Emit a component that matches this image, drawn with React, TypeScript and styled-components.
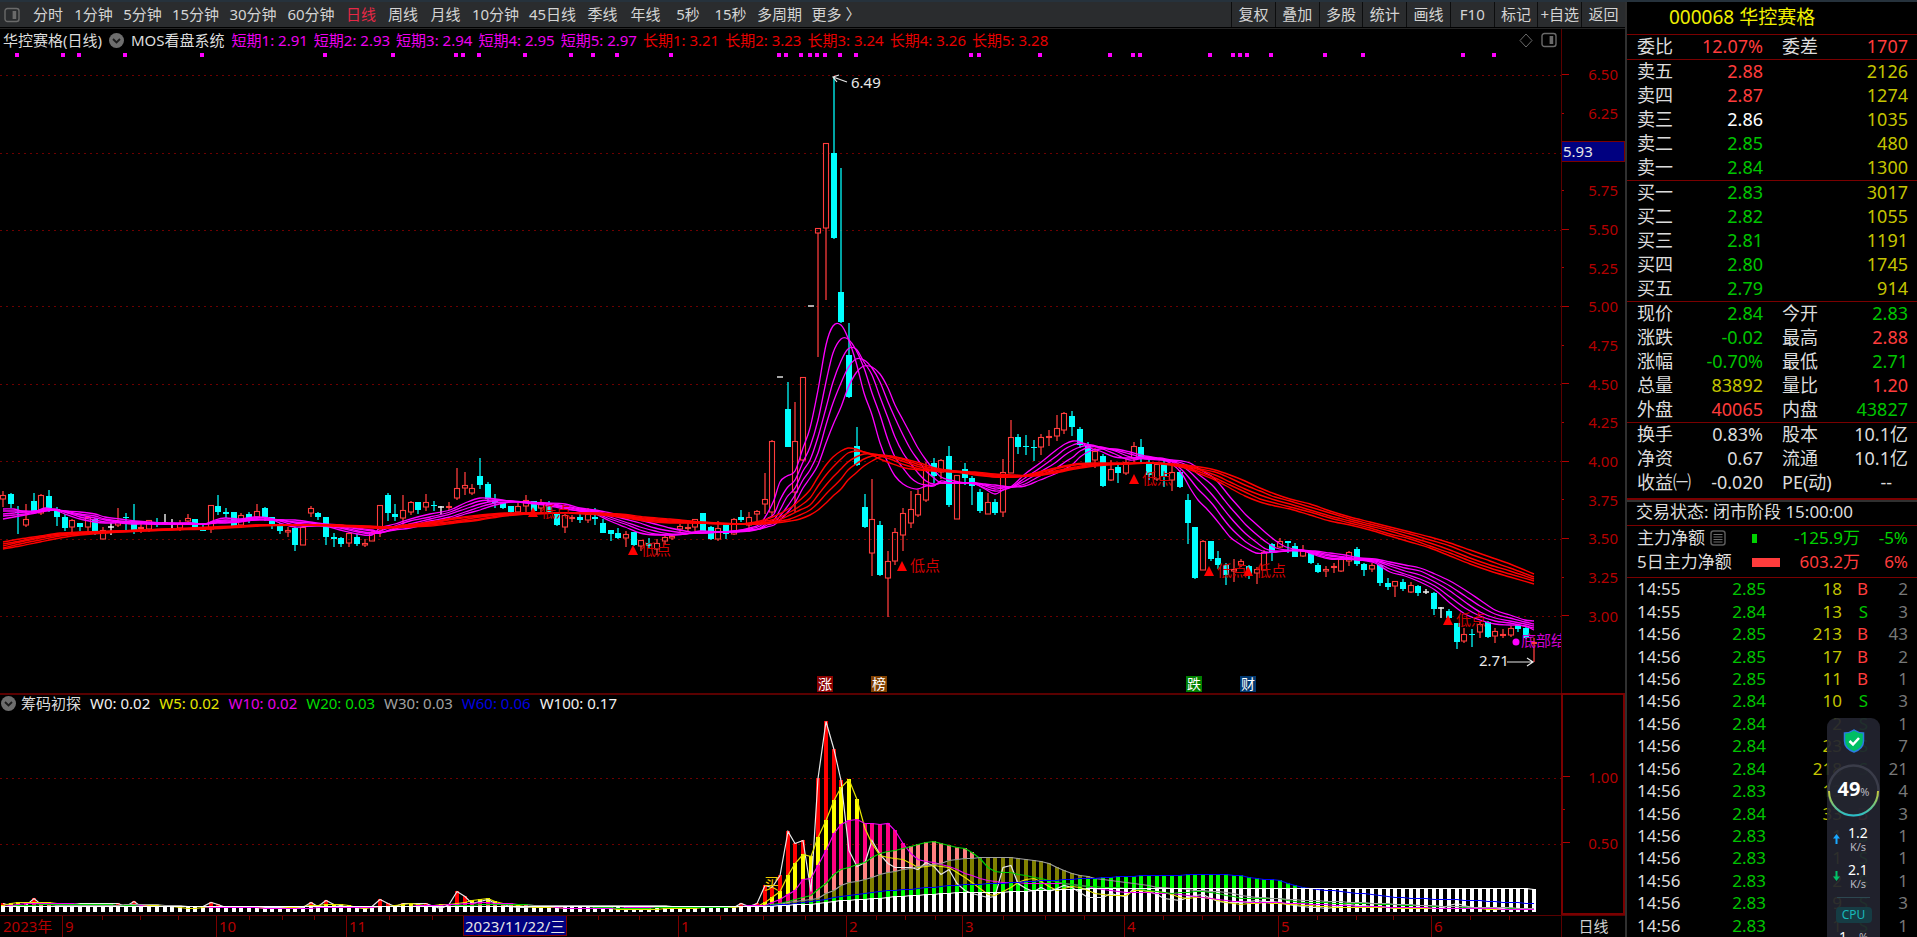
import React from 'react';
import styled, { createGlobalStyle } from 'styled-components';

const RED = '#ff3c3c';
const GREEN = '#00c400';
const YELLOW = '#c4c400';
const PALE = '#dcdcdc';
const LINE = '#7a0000';
const DIM_LINE = '#5a0000';
const AXIS_TEXT = '#b40000';

/* ---------- data ---------- */

type Kind = 'U' | 'D' | 'N';

// kind, wick top, body top, body bottom, wick bottom (plot coordinates)
const CANDLES = `
U 491 495 499 507|D 493 494 504 508|D 506 512 513 534|U 504 519 525 527|D 493 501 511 511|U 494 495 513 515|D 490 496 508 512|D 507 509 517 526|D 514 517 528 531|U 519 520 527 532
D 523 523 527 531|U 517 517 527 532|D 518 519 534 535|U 527 530 539 539|N 523 527 527 535|U 508 522 525 527|D 513 517 518 530|D 504 521 530 534|U 523 527 528 533|U 520 520 529 532
D 518 524 525 527|N 514 523 523 525|N 519 524 524 529|U 520 523 528 531|U 514 518 521 522|D 519 519 527 527|D 525 529 531 531|U 505 505 529 533|D 495 506 512 515|D 508 512 514 518
D 512 512 526 526|U 513 515 525 527|D 512 514 519 523|U 504 511 517 519|D 507 508 517 521|D 517 517 525 529|D 523 525 531 534|U 527 530 532 537|D 527 528 545 551|U 526 527 545 545
U 506 508 513 517|D 512 513 517 520|D 517 517 537 545|D 533 537 539 547|D 537 538 544 547|U 532 533 543 547|D 534 537 544 546|U 539 543 545 547|U 530 532 541 541|U 505 505 530 537
D 493 495 513 521|D 504 514 517 521|U 495 510 518 525|U 501 502 512 515|D 502 502 510 514|U 494 502 507 511|D 501 505 506 511|N 506 507 507 514|U 502 506 507 510|U 468 488 498 500
U 472 485 488 495|U 484 488 493 495|D 458 476 485 489|D 482 484 499 502|D 494 500 503 508|D 502 502 508 509|D 506 506 512 513|U 503 506 512 514|U 495 500 506 512|D 501 501 511 512
U 499 502 508 512|D 501 503 513 514|D 513 514 525 526|U 514 515 527 533|U 515 517 518 522|D 514 517 520 523|U 508 514 520 523|D 508 517 519 525|D 519 523 533 533|D 530 530 534 541
D 528 533 538 539|U 531 534 538 547|D 532 532 545 546|U 540 540 546 551|D 538 543 546 549|U 539 543 549 555|U 535 537 541 545|U 534 536 538 540|U 524 526 529 532|U 523 527 528 531
U 519 519 527 531|D 513 513 531 531|D 526 527 539 540|U 521 528 539 541|D 524 525 534 539|U 518 519 534 535|D 510 517 520 522|U 512 517 525 532|U 510 511 514 523|U 473 499 504 514
U 440 441 512 517|N 377 377 377 377|D 382 409 447 447|U 402 441 492 512|U 377 377 460 461|N 306 306 306 306|U 228 228 233 357|U 143 143 228 300|D 77 153 238 239|D 168 292 322 323
D 323 355 397 398|D 427 446 465 466|D 494 507 527 528|U 479 519 553 576|D 521 525 575 576|U 551 561 578 617|U 528 532 561 565|U 508 513 535 551|U 491 509 523 528|U 490 494 515 517
U 462 469 500 502|D 458 463 476 483|U 459 460 472 479|D 446 456 505 507|U 475 475 519 519|D 463 469 478 485|D 476 478 486 505|D 489 492 511 513|U 493 502 514 514|D 499 502 513 515
U 459 472 512 517|U 420 437 473 473|D 434 437 447 454|D 435 446 447 455|D 440 447 448 461|U 434 437 447 455|U 430 436 437 446|U 415 428 436 441|U 412 413 430 434|D 411 416 427 436
D 427 429 445 448|D 442 445 463 463|U 448 451 460 468|D 454 456 486 487|U 460 469 480 481|D 463 467 473 483|U 459 462 473 475|U 442 446 458 462|D 439 447 457 463|D 458 462 475 480
U 462 464 479 481|D 460 463 476 487|U 465 472 480 491|D 470 472 487 488|D 494 500 523 544|D 527 527 578 579|U 540 541 570 570|D 541 541 559 561|D 551 558 565 569|D 563 565 575 585
U 559 569 571 582|U 559 561 565 567|D 565 566 575 579|U 567 569 573 584|U 550 552 570 570|D 543 544 552 561|U 538 541 547 548|D 541 541 543 553|D 543 546 557 557|U 545 550 556 557
D 553 553 563 564|D 563 565 572 573|U 566 569 571 577|U 563 566 567 573|U 557 559 571 572|U 551 552 561 566|D 547 549 564 566|D 563 564 570 576|U 563 565 569 572|D 564 565 583 586
D 578 583 587 590|U 581 581 586 597|D 579 582 589 591|U 582 585 592 593|D 585 586 593 596|N 589 592 592 594|D 592 593 609 615|N 607 608 608 618|D 609 611 618 620|D 623 623 642 649
U 628 634 641 643|D 629 634 635 647|U 622 624 632 638|D 621 622 637 638|U 628 631 636 643|U 629 634 635 638|U 626 628 635 637|D 625 625 629 632|D 627 628 638 639|U 638 642 643 662`
  .trim()
  .split(/[|\n]/)
  .map((row) => {
    const [kind, ...ys] = row.split(' ');
    const [high, top, bottom, low] = ys.map(Number);
    return { kind: kind as Kind, high, top, bottom, low };
  });

const PLOT_W = 1561;
const barX = (i: number) => 3 + i * 7.692;

const table = (text: string) =>
  text
    .trim()
    .split(/[;\n]+/)
    .map((r) => r.trim().split(/[ ,]+/).map(Number));

// x, then the five short averages
const SHORT = table(`
3 509 511 514 516 519;14 509 511 513 515 517;25 512 511 512 514 515;36 511 511 512 512 513;45 508 509 510 511 511;55 510 510 509 510 510
65 514 512 512 511 511;80 519 517 515 514 512;95 522 520 518 516 514;105 523 522 520 519 517;120 523 522 522 521 519;135 524 523 523 522 521
150 523 524 524 523 522;165 523 524 524 524 523;190 523 523 524 524 524;205 524 524 524 524 524;215 520 521 522 523 523;225 518 520 521 522 523
240 519 520 521 521 522;255 517 518 519 520 520;268 518 518 519 520 520;280 523 521 520 520 520;295 527 525 523 522 520;310 526 526 525 523 522
325 526 526 526 525 524;340 530 528 527 526 525;358 534 532 531 529 528;372 535 534 533 531 530;380 528 531 533 533 532;395 524 526 528 529 530
410 519 521 524 526 528;430 514 517 519 521 523;450 510 512 514 517 519;465 503 506 509 512 514;480 498 501 504 507 510;495 499 500 501 503 505
510 501 501 501 502 502;525 503 502 502 502 502;545 505 504 504 503 503;565 509 508 507 506 504;580 511 511 510 509 508;595 514 513 512 511 510
610 521 519 517 515 513;625 527 524 522 519 516;640 533 530 527 523 520;655 535 534 531 528 524;670 535 535 534 531 528;685 534 534 534 533 531
700 531 532 533 533 533;720 532 532 532 532 532;735 531 531 531 532 532;750 528 529 530 530 531;760 524 526 528 529 529;767 514 519 523 525 527
774 500 514 520 523 525;780 482 500 510 516 520;787 476 488 497 507 513;795 471 480 488 495 503;803 448 462 471 480 488;810 428 447 460 470 478
818 390 420 437 453 465;826 345 382 408 425 443;833 326 353 382 403 425;841 325 339 361 383 407;848 338 339 349 368 388;856 362 350 349 359 373
864 393 368 362 360 366;872 415 393 375 368 367;880 443 415 397 382 374;888 463 440 418 402 388;895 476 457 437 418 405;903 484 468 453 435 420
911 488 478 464 450 435;918 489 483 473 460 448;926 486 485 481 471 460;934 486 485 484 478 470;941 481 483 483 483 477;950 483 483 483 483 480
965 483 483 483 483 483;975 484 484 483 483 483;985 489 488 486 485 484;995 494 491 489 487 485;1003 490 490 488 487 486;1012 486 487 487 487 487
1025 474 478 481 484 486;1040 463 468 472 476 480;1055 451 457 463 469 474;1065 444 449 455 462 469;1073 441 445 450 457 464;1080 442 443 447 451 457
1090 448 445 445 447 451;1100 451 448 447 447 449;1115 457 454 451 450 449;1130 458 460 457 454 452;1145 457 458 459 458 456;1160 459 459 460 459 458
1172 464 462 461 461 460;1182 474 470 466 463 461;1190 488 479 472 467 463;1198 500 489 480 474 468;1206 508 497 488 480 473;1214 517 506 497 487 478
1222 527 517 507 497 487;1230 537 527 517 507 497;1238 543 535 526 516 506;1246 548 542 534 525 515;1256 553 548 542 534 524;1266 553 552 549 542 533
1276 552 552 551 548 541;1286 551 551 551 550 547;1300 550 550 550 551 550;1315 555 554 553 552 551;1330 559 558 556 555 553;1345 559 559 558 557 555
1360 560 560 560 559 558;1375 563 562 561 560 559;1390 572 569 566 564 562;1405 576 574 571 568 565;1420 582 579 575 571 568;1435 590 586 582 578 574
1450 603 597 591 586 581;1465 614 608 602 596 590;1480 620 616 612 606 600;1495 624 621 618 614 610;1510 625 623 621 618 615;1525 626 626 624 622 620
1534 630 628 626 624 621`);

// x, then the five long averages
const LONG = table(`
3 542 544 546 548 549;20 539 541 542 544 546;40 536 537 538 540 542;60 533 534 535 536 538;80 532 533 533 534 535;120 531 531 531 532 532
170 529 529 529 530 530;210 527 528 528 528 529;260 525 525 525 525 526;300 525 525 525 525 525;330 526 525 525 525 525;370 528 527 527 527 526
385 528 528 528 527 527;405 525 526 527 527 527;430 522 523 524 525 526;455 518 519 521 522 523;480 515 516 517 519 520;505 513 514 514 515 516
530 513 513 513 514 514;560 513 513 513 513 513;590 514 514 513 513 513;620 517 516 515 515 514;645 521 520 519 518 517;670 523 522 521 520 519
700 523 523 523 522 522;740 524 524 524 524 524;760 521 522 523 524 524;775 516 519 521 522 523;790 508 512 515 519 521;800 500 506 510 515 519
810 490 498 505 510 515;818 477 486 495 503 510;826 465 475 485 494 503;833 457 467 477 487 496;841 451 459 469 479 489;848 448 453 462 470 480
856 449 451 457 464 473;864 452 452 454 459 466;872 455 454 454 456 461;880 459 456 455 455 457;890 463 459 457 456 456;905 468 465 462 460 459
920 470 469 467 465 463;935 471 471 470 469 468;955 472 472 472 471 471;975 475 474 473 473 472;995 477 477 476 475 474;1015 477 477 477 476 475
1035 473 474 475 475 476;1055 468 469 471 472 473;1075 464 465 467 468 469;1095 463 464 464 465 466;1120 463 464 464 464 464;1150 463 463 463 463 463
1170 465 464 464 464 464;1185 468 467 466 465 465;1200 474 472 470 469 467;1215 480 478 475 472 470;1230 488 485 482 478 475;1245 496 492 489 485 481
1260 502 499 495 491 488;1275 506 503 500 497 494;1290 509 507 504 501 499;1310 515 512 510 507 504;1330 521 518 516 513 511;1350 525 523 521 519 517
1370 530 528 526 524 522;1390 536 534 531 529 527;1410 542 539 537 534 532;1430 548 546 543 540 537;1450 556 553 550 546 543;1470 564 561 558 554 550
1490 571 568 565 561 557;1510 577 574 571 568 564;1534 584 581 579 577 574`);

interface Series {
  bar: string;
  line: string;
  pts: number[][];
}

// chip-distribution series, from the lowest layer to the top one
const CHIPS: Series[] = [
  {
    bar: '#ff0000',
    line: '#e8e8e8',
    pts: table(`
3 903;11 905;26 905;33 897;41 904;118 903;126 906;133 901;141 906;203 906;211 902;218 904;226 907;303 907;310 902;318 906;326 900;334 904;350 907;364 908
372 906;380 899;387 903;395 906;403 903;426 903;441 908;449 904;457 891;464 895;472 903;487 899;495 903;520 907;570 905;700 907;735 907;742 903;749 906
757 903;765 884;772 887;780 875;787 830;795 843;803 840;811 893;818 781;826 721;833 746;841 776;849 850;857 866;864 863;872 840;880 854;887 863;895 867
910 867;918 869;925 862;933 865;941 874;948 867;956 882;964 890;979 895;987 897;995 897;1002 868;1010 863;1017 882;1025 888;1033 891;1041 887;1048 891
1064 885;1074 887;1087 897;1103 897;1110 893;1125 897;1134 888;1148 890;1165 898;1180 900;1200 893;1220 902;1240 902;1255 900;1280 902;1300 906;1326 908
1350 904;1400 908;1440 908;1456 903;1475 908;1534 909`),
  },
  {
    bar: '#ffff00',
    line: '#e6e600',
    pts: table(`
3 905;18 902;48 902;65 904;150 905;195 908;215 906;280 908;325 904;345 904;360 908;395 905;410 903;430 905;457 903;487 898;500 903;530 907;640 909;757 906
765 902;772 897;780 891;787 876;795 863;803 854;811 856;818 838;826 820;833 801;841 787;849 779;857 799;864 827;872 843;880 855;887 857;902 858;917 867
933 865;950 867;960 875;973 882;985 893;995 895;1005 890;1018 882;1030 877;1040 880;1055 890;1075 885;1095 893;1125 896;1134 890;1162 891;1183 898;1207 897
1220 901;1238 904;1265 902;1293 904;1341 907;1534 909`),
  },
  {
    bar: '#ff0080',
    line: '#f000f0',
    pts: table(`
3 906;30 903;65 903;120 905;290 908;400 906;457 904;487 902;520 904;570 908;680 907;765 905;780 899;795 890;803 879;811 878;818 866;826 850;833 834;841 824
849 820;857 819;864 823;872 823;880 824;887 822;895 830;903 843;910 852;920 860;935 862;950 866;963 872;980 878;1000 882;1040 883;1060 883;1080 885;1110 890
1124 892;1140 892;1170 893;1200 897;1230 901;1260 902;1300 903;1340 905;1400 907;1534 909`),
  },
  {
    bar: '#ff8080',
    line: '#00d200',
    pts: table(`
3 906;50 904;100 904;150 906;440 906;487 904;570 905;620 908;765 906;787 901;803 897;811 895;826 883;833 875;841 869;849 867;857 864;864 862;872 857;880 853
895 850;910 846;925 842;935 841;948 845;955 847;965 848;973 853;980 858;988 867;997 872;1010 872;1025 875;1040 878;1060 882;1080 885;1110 887;1135 888
1170 893;1200 891;1220 893;1240 898;1280 898;1300 902;1360 903;1440 906;1534 908`),
  },
  {
    bar: '#808000',
    line: '#a0a0a0',
    pts: table(`
3 906;100 905;150 904;200 906;487 906;570 905;765 906;803 900;818 898;826 893;833 890;841 885;849 882;865 879;880 874;895 871;910 868;925 865;940 863;950 860
965 858;985 857;1010 857;1020 858;1040 861;1048 863;1060 868;1073 873;1090 877;1110 880;1134 883;1160 887;1200 890;1225 892;1250 896;1290 899;1330 901
1400 904;1450 906;1534 908`),
  },
  {
    bar: '#00ff00',
    line: '#0000ff',
    pts: table(`
3 906;570 906;765 906;803 902;820 900;841 896;865 893;880 891;910 889;940 886;970 884;1000 883;1025 881;1050 880;1085 878;1110 877;1124 876;1145 875;1180 875
1190 874;1225 874;1240 875;1255 878;1270 879;1280 880;1290 884;1305 888;1330 890;1370 894;1410 898;1450 899;1490 901;1534 903`),
  },
  {
    bar: '#ffffff',
    line: '#ffffff',
    pts: table(`
3 906;765 906;803 904;820 903;841 900;865 899;895 896;930 894;960 892;1000 892;1040 890;1100 888;1526 888;1534 889`),
  },
];

const DOTS = [
  17, 63, 79, 125, 202, 325, 393, 456, 463, 479, 525, 571, 593, 617, 671, 779, 786, 801, 810, 817, 825, 840, 856, 971,
  979, 1040, 1110, 1133, 1140, 1210, 1233, 1240, 1247, 1271, 1325, 1363, 1463, 1494,
];

const at = (pts: number[][], x: number) => {
  for (let k = 1; k < pts.length; k++) {
    if (x <= pts[k][0]) {
      const [x0, y0] = pts[k - 1];
      const [x1, y1] = pts[k];
      return y0 + ((y1 - y0) * (x - x0)) / (x1 - x0);
    }
  }
  return pts[pts.length - 1][1];
};

const smooth = (pts: number[][], col: number) => {
  let d = `M${pts[0][0]} ${pts[0][col]}`;
  for (let i = 0; i < pts.length - 1; i++) {
    const a = pts[Math.max(0, i - 1)];
    const b = pts[i];
    const c = pts[i + 1];
    const e = pts[Math.min(pts.length - 1, i + 2)];
    const dx = (c[0] - b[0]) / 3;
    const m1 = (c[col] - a[col]) / (c[0] - a[0]);
    const m2 = (e[col] - b[col]) / (e[0] - b[0]);
    d += `C${b[0] + dx} ${b[col] + m1 * dx} ${c[0] - dx} ${c[col] - m2 * dx} ${c[0]} ${c[col]}`;
  }
  return d;
};

const PERIODS: [string, number][] = [
  ['分时', 42], ['1分钟', 49], ['5分钟', 49], ['15分钟', 57], ['30分钟', 58], ['60分钟', 58], ['日线', 42], ['周线', 42],
  ['月线', 43], ['10分钟', 57], ['45日线', 57], ['季线', 43], ['年线', 43], ['5秒', 42], ['15秒', 43], ['多周期', 55],
  ['更多 〉', 58],
];
const ACTIONS = ['复权', '叠加', '多股', '统计', '画线', 'F10', '标记', '+自选', '返回'];

const SHORT_LABELS = ['短期1: 2.91', '短期2: 2.93', '短期3: 2.94', '短期4: 2.95', '短期5: 2.97'];
const LONG_LABELS = ['长期1: 3.21', '长期2: 3.23', '长期3: 3.24', '长期4: 3.26', '长期5: 3.28'];
const CHIP_LABELS: [string, string][] = [
  ['W0: 0.02', '#f0f0f0'], ['W5: 0.02', '#e6e600'], ['W10: 0.02', '#e600e6'], ['W20: 0.03', '#00dc00'],
  ['W30: 0.03', '#a0a0a0'], ['W60: 0.06', '#0000e0'], ['W100: 0.17', '#f0f0f0'],
];

const PRICES = [
  '6.50', '6.25', '', '5.75', '5.50', '5.25', '5.00', '4.75', '4.50', '4.25', '4.00', '3.75', '3.50', '3.25', '3.00',
];

type Level = [string, string, string, string];
const SELLS: Level[] = [
  ['卖五', '2.88', '2126', RED], ['卖四', '2.87', '1274', RED], ['卖三', '2.86', '1035', '#ffffff'],
  ['卖二', '2.85', '480', GREEN], ['卖一', '2.84', '1300', GREEN],
];
const BUYS: Level[] = [
  ['买一', '2.83', '3017', GREEN], ['买二', '2.82', '1055', GREEN], ['买三', '2.81', '1191', GREEN],
  ['买四', '2.80', '1745', GREEN], ['买五', '2.79', '914', GREEN],
];
type Pair = [string, string, string, string, string, string];
const QUOTE: Pair[] = [
  ['现价', '2.84', GREEN, '今开', '2.83', GREEN],
  ['涨跌', '-0.02', GREEN, '最高', '2.88', RED],
  ['涨幅', '-0.70%', GREEN, '最低', '2.71', GREEN],
  ['总量', '83892', YELLOW, '量比', '1.20', RED],
  ['外盘', '40065', RED, '内盘', '43827', GREEN],
];
const BASICS: Pair[] = [
  ['换手', '0.83%', PALE, '股本', '10.1亿', PALE],
  ['净资', '0.67', PALE, '流通', '10.1亿', PALE],
  ['收益㈠', '-0.020', PALE, 'PE(动)', '--', PALE],
];
const TRADES = `14:55 2.85 18 B 2|14:55 2.84 13 S 3|14:56 2.85 213 B 43|14:56 2.85 17 B 2|14:56 2.85 11 B 1|14:56 2.84 10 S 3|14:56 2.84 2 S 1|14:56 2.84 23 S 7|14:56 2.84 218 S 21|14:56 2.83 13 S 4|14:56 2.84 33 B 3|14:56 2.83 1 S 1|14:56 2.83 1 S 1|14:56 2.83 2 S 1|14:56 2.83 9 S 3|14:56 2.83 1 S 1`
  .split('|')
  .map((r) => r.split(' '));

const MONTHS: [string, number][] = [
  ['2023年', 62], ['9', 154], ['10', 130], ['11', 332], ['1', 168], ['2', 116], ['3', 162], ['4', 154], ['5', 153],
  ['6', 130],
];
const WEEKS = [
  102, 140, 178, 249, 282, 314, 389, 432, 598, 639, 720, 763, 805, 876, 905, 935, 1003, 1045, 1084, 1163, 1202, 1239,
  1317, 1356, 1393, 1470, 1509,
];
const LOWS: [number, number][] = [[533, 512], [633, 550], [902, 566], [1134, 479], [1209, 571], [1248, 571], [1448, 620]];
const EVENTS: [string, number, string][] = [
  ['涨', 817, '#8b0000'], ['榜', 871, '#804000'], ['跌', 1186, '#008000'], ['财', 1240, '#003870'],
];

/* ---------- styles ---------- */

const Global = createGlobalStyle`
  *, *::before, *::after { box-sizing: border-box; }
  body {
    margin: 0;
    background: #000;
    color: ${PALE};
    font-family: "Noto Sans", "Noto Sans CJK SC", sans-serif;
    font-size: 15px;
    line-height: 20px;
  }
  button { font: inherit; }
`;

const Page = styled.div`
  display: flex;
  height: 100vh;
  overflow: hidden;
  border-top: 2px solid #26323c;
`;

const Workspace = styled.main`
  flex: 1;
  min-width: 0;
  display: flex;
  flex-direction: column;
`;

const Toolbar = styled.nav`
  display: flex;
  align-items: stretch;
  height: 25px;
  margin-bottom: 1px;
  background: #2a2c2e;
  overflow: hidden;
  flex-shrink: 0;
`;

const ToolIcon = styled.button`
  width: 27px;
  padding: 0 0 0 4px;
  border: 0;
  background: none;
  display: flex;
  align-items: center;
`;

const PeriodButton = styled.button<{ $w: number; $active: boolean }>`
  flex: 0 0 ${(p) => p.$w}px;
  padding: 0 0 1px;
  border: 0;
  background: none;
  white-space: pre;
  color: ${(p) => (p.$active ? '#e62846' : '#d4d4d4')};
`;

const Actions = styled.div`
  margin-left: auto;
  display: grid;
  grid-template-columns: repeat(9, 1fr);
  width: 394px;
`;

const ActionButton = styled.button`
  padding: 0 0 1px;
  border: 0;
  border-left: 1px solid #0c0d0e;
  background: none;
  color: #d4d4d4;
  white-space: nowrap;
`;

const MainPane = styled.section`
  flex: 664 1 0;
  min-height: 0;
  display: flex;
  border-top: 1px solid #242424;
`;

const LowerPane = styled.section`
  flex: 222 1 0;
  min-height: 0;
  display: flex;
`;

const Plot = styled.div`
  position: relative;
  flex: 1;
  min-width: 0;
  overflow: hidden;
`;

const LowerPlot = styled(Plot)`
  border-top: 2px solid ${DIM_LINE};
`;

const Drawing = styled.svg`
  position: absolute;
  left: 0;
  top: 0;
  width: 100%;
  height: 100%;
  display: block;
`;

const Legend = styled.div`
  position: relative;
  display: flex;
  align-items: center;
  height: 22px;
  gap: 6px;
  padding: 0 4px 0 3px;
  white-space: nowrap;
`;

const ChipLegend = styled(Legend)`
  height: 16px;
  gap: 9px;
  padding-left: 1px;
`;

const LegendName = styled.span`
  display: flex;
  align-items: center;
  gap: 5px;
`;

const MainName = styled(LegendName)`
  gap: 7px;
  padding-right: 1px;
`;

const LegendItem = styled.span<{ $color: string }>`
  color: ${(p) => p.$color};
`;

const LegendTools = styled.div`
  display: flex;
  align-items: center;
  gap: 8px;
  margin-left: auto;
`;

const IconButton = styled.button`
  display: flex;
  padding: 0;
  border: 0;
  background: none;
`;

const Mark = styled.span<{ $x: number; $y: number; $color: string }>`
  position: absolute;
  left: ${(p) => (p.$x / PLOT_W) * 100}%;
  top: ${(p) => p.$y * 100}%;
  margin-top: -11px;
  color: ${(p) => p.$color};
  white-space: nowrap;
`;

const EventBadge = styled.button<{ $x: number; $bg: string }>`
  position: absolute;
  left: ${(p) => (p.$x / PLOT_W) * 100}%;
  bottom: 1px;
  width: 16px;
  height: 16px;
  padding: 0;
  border: 0;
  background: ${(p) => p.$bg};
  color: #fff;
  font-size: 14px;
  line-height: 16px;
`;

const PriceAxis = styled.div`
  flex: 0 0 64px;
  display: flex;
  flex-direction: column;
  padding: 26px 0 58px;
  border-left: 1px solid ${DIM_LINE};
`;

const AxisRow = styled.div<{ $major: boolean }>`
  flex: 1;
  display: flex;
  align-items: center;
  justify-content: space-between;
  padding-right: 7px;
  color: ${AXIS_TEXT};
  &::before {
    content: '';
    width: ${(p) => (p.$major ? 7 : 2)}px;
    height: 1px;
    background: ${AXIS_TEXT};
  }
`;

const CursorRow = styled.div`
  flex: 1;
  display: flex;
  align-items: center;
`;

const CursorPrice = styled.span`
  flex: 1;
  height: 21px;
  line-height: 19px;
  padding-left: 1px;
  border: 1px solid ${LINE};
  border-left: 0;
  background: #000080;
  color: #e6e6e6;
`;

const LowerAxis = styled.div`
  flex: 0 0 64px;
  display: flex;
  flex-direction: column;
  padding-top: 65px;
  border: 2px solid ${LINE};
  > div {
    flex: 0 0 33px;
    padding-right: 5px;
  }
`;

const TimeAxis = styled.div`
  display: flex;
  flex: 0 0 22px;
  border-top: 1px solid ${DIM_LINE};
`;

const Months = styled.div`
  position: relative;
  flex: 1;
  min-width: 0;
  display: grid;
  grid-template-columns: ${MONTHS.map(([, n]) => `minmax(0, ${n}fr)`).join(' ')};
`;

const Month = styled.span`
  padding-left: 2px;
  border-left: 1px solid ${LINE};
  color: ${AXIS_TEXT};
  white-space: nowrap;
  &:first-of-type {
    border-left-color: transparent;
  }
`;

const CursorDate = styled.span`
  position: absolute;
  left: 29.66%;
  top: 0;
  bottom: 1px;
  padding: 0 1px;
  border: 1px solid ${LINE};
  border-top: 0;
  background: #000080;
  color: #e6e6e6;
`;

const PeriodName = styled.span`
  flex: 0 0 64px;
  border-left: 1px solid ${DIM_LINE};
  text-align: center;
  color: #d0d0d0;
`;

const Sidebar = styled.aside`
  position: relative;
  flex: 0 0 292px;
  display: flex;
  flex-direction: column;
  border-left: 2px solid #303030;
  font-size: 17px;
  line-height: 22px;
  overflow: hidden;
`;

const Title = styled.h1`
  margin: 0;
  height: 33px;
  padding: 4px 0 0 42px;
  border-bottom: 1px solid ${LINE};
  font-size: 19px;
  font-weight: 400;
  color: #f0f000;
  white-space: nowrap;
`;

const Block = styled.section<{ $heavy?: boolean }>`
  padding: 0 9px ${(p) => (p.$heavy ? 3 : 0)}px 10px;
  border-bottom: ${(p) => (p.$heavy ? 2 : 1)}px solid ${LINE};
`;

const QuoteTable = styled.table`
  width: 100%;
  table-layout: fixed;
  border-collapse: collapse;
  font-size: 18px;
`;

const Label = styled.th`
  height: 24px;
  padding: 0 0 2px;
  font-weight: 400;
  text-align: left;
  white-space: nowrap;
`;

const PairLabel = styled(Label)`
  padding-left: 19px;
`;

const Value = styled.td<{ $color: string; $inset?: number }>`
  padding: 0 ${(p) => p.$inset ?? 0}px 2px 0;
  text-align: right;
  white-space: nowrap;
  color: ${(p) => p.$color};
`;

const Status = styled.div`
  height: 26px;
  padding-left: 9px;
  border-top: 2px solid #303030;
  border-bottom: 1px solid ${LINE};
  line-height: 20px;
  white-space: nowrap;
`;

const NetBlock = styled.section`
  padding: 0 9px 3px 10px;
  border-bottom: 1px solid ${LINE};
`;

const NetRow = styled.div<{ $color: string }>`
  display: grid;
  grid-template-columns: 115px 108px 48px;
  align-items: center;
  height: 24px;
  text-align: right;
  color: ${(p) => p.$color};
`;

const NetLabel = styled.span`
  display: flex;
  align-items: center;
  gap: 5px;
  color: ${PALE};
  white-space: nowrap;
`;

const NetAmount = styled.span`
  display: flex;
  align-items: center;
  justify-content: space-between;
`;

const NetBar = styled.i`
  height: 9px;
  background: currentColor;
`;

const Trades = styled.div`
  flex: 1;
  min-height: 352px;
  padding: 0 9px 0 10px;
`;

const TradeTable = styled(QuoteTable)`
  height: 100%;
  font-size: 17px;
  td {
    padding: 0;
    line-height: 20px;
  }
`;

const Monitor = styled.div`
  position: absolute;
  right: 37px;
  bottom: 0;
  width: 53px;
  height: 219px;
  padding-top: 11px;
  border-radius: 9px 9px 0 0;
  background: rgba(34, 36, 47, 0.93);
  display: flex;
  flex-direction: column;
  align-items: center;
  overflow: hidden;
  color: #fff;
  > svg {
    flex-shrink: 0;
  }
`;

const Gauge = styled.div`
  position: relative;
  flex: 0 0 53px;
  width: 53px;
  margin-top: 7px;
  display: flex;
  align-items: center;
  justify-content: center;
  font-size: 20px;
  font-weight: 700;
  small {
    font-size: 11px;
    font-weight: 400;
    color: #b8b8c0;
  }
  svg {
    position: absolute;
    left: 0;
    top: 0;
  }
  span {
    position: relative;
  }
`;

const Speed = styled.div`
  display: flex;
  align-items: center;
  gap: 8px;
  flex: 0 0 30px;
  margin-top: 7px;
  padding-right: 6px;
  font-size: 14px;
  line-height: 15px;
  text-align: center;
  small {
    display: block;
    font-size: 11px;
    line-height: 13px;
    color: #b8b8c0;
  }
`;

const MonitorRule = styled.hr`
  flex-shrink: 0;
  width: 33px;
  margin: 6px 0 9px;
  border: 0;
  border-top: 1px solid #2c4750;
`;

const CpuTag = styled.span`
  flex: 0 0 16px;
  width: 36px;
  border-radius: 4px;
  background: #163c44;
  color: #18b8ba;
  font-size: 12px;
  line-height: 16px;
  text-align: center;
`;

const CpuLoad = styled.div`
  margin-top: 6px;
  display: flex;
  gap: 12px;
  font-size: 14px;
  line-height: 15px;
  small {
    font-size: 11px;
    color: #b8b8c0;
  }
`;

const MonitorBody = styled.div`
  display: flex;
  flex-direction: column;
  align-items: center;
  padding-top: 4px;
`;

/* ---------- parts ---------- */

const PanelIcon = () => (
  <svg width="16" height="16" viewBox="0 0 16 16" fill="none" aria-hidden="true">
    <rect x="1" y="1.5" width="14" height="13" rx="2.5" stroke="#6a6a6a" strokeWidth="1.4" />
    <rect x="8.6" y="4" width="3.6" height="8" fill="#6a6a6a" />
  </svg>
);

const ChevronIcon = () => (
  <svg width="15" height="15" viewBox="0 0 15 15" fill="none" aria-hidden="true">
    <circle cx="7.5" cy="7.5" r="7.5" fill="#6e6e6e" />
    <path d="M4 6l3.5 3.5L11 6" stroke="#1c1c1c" strokeWidth="1.8" />
  </svg>
);

const DiamondIcon = () => (
  <svg width="14" height="15" viewBox="0 0 14 15" fill="none" aria-hidden="true">
    <path d="M7 1l6 6.5L7 14 1 7.5z" stroke="#6a6a6a" />
  </svg>
);

const NoteIcon = () => (
  <svg width="16" height="16" viewBox="0 0 16 16" fill="none" aria-hidden="true">
    <rect x="1" y="1" width="14" height="14" rx="2.5" stroke="#5a5a5a" strokeWidth="1.5" />
    <path d="M3.5 4.5h9M3.5 7h9M3.5 9.5h9M3.5 12h9" stroke="#6e6e6e" />
  </svg>
);

const Candle = ({ i }: { i: number }) => {
  const { kind, high, top, bottom, low } = CANDLES[i];
  const x = Math.round(barX(i));
  if (kind === 'N') {
    return <path d={`M${x - 3} ${top}h6M${x} ${high}V${low}`} stroke="#f0f0f0" strokeWidth="1.4" />;
  }
  const up = kind === 'U';
  const color = up ? '#ff3c3c' : '#00ffff';
  return (
    <g>
      <path d={`M${x} ${high}V${top}M${x} ${bottom}V${low}`} stroke={color} strokeWidth="1.5" opacity="0.85" />
      {up ? (
        <rect
          x={x - 2.5}
          y={top + 0.5}
          width={5}
          height={Math.max(1, bottom - top - 0.5)}
          fill="none"
          stroke={color}
          strokeWidth="1.1"
        />
      ) : (
        <rect x={x - 3} y={top} width={6} height={Math.max(1, bottom - top)} fill={color} />
      )}
    </g>
  );
};

const CandleDrawing = () => (
  <Drawing viewBox="0 29 1561 664" preserveAspectRatio="none" role="img" aria-label="日线走势">
    {[75.5, 153.5, 230.5, 306.5, 384.5, 461.5, 539.5, 616.5].map((y) => (
      <path key={y} d={`M0 ${y}H1561`} stroke="#6e0000" strokeDasharray="2 4" />
    ))}
    {DOTS.map((x) => (
      <rect key={x} x={x - 2} y="53" width="4" height="4" fill="#ff00ff" />
    ))}
    {CANDLES.map((_, i) => (
      <Candle key={i} i={i} />
    ))}
    {[1, 2, 3, 4, 5].map((c) => (
      <path key={c} d={smooth(SHORT, c)} fill="none" stroke="#ff00ff" strokeWidth="1.3" />
    ))}
    {[1, 2, 3, 4, 5].map((c) => (
      <path key={c} d={smooth(LONG, c)} fill="none" stroke="#ff0000" strokeWidth="1.4" />
    ))}
    {LOWS.map(([x, y]) => (
      <path key={x} d={`M${x} ${y - 5}l5 10h-10z`} fill="#ff0000" />
    ))}
    <circle cx="1516" cy="642" r="3.5" fill="#ff00ff" />
    <path d="M847 82L833 77M839 75l-6 2l4 5" fill="none" stroke="#e8e8e8" strokeWidth="1.2" />
    <path d="M1507 662H1533M1527 658l6 4l-6 4" fill="none" stroke="#e8e8e8" strokeWidth="1.2" />
  </Drawing>
);

const ChipDrawing = () => {
  const bars = CANDLES.map((_, i) => barX(i));
  return (
    <Drawing viewBox="0 695 1561 220" preserveAspectRatio="none" role="img" aria-label="筹码初探分布">
      {[778.5, 844.5].map((y) => (
        <path key={y} d={`M0 ${y}H1561`} stroke="#6e0000" strokeDasharray="2 4" />
      ))}
      {CHIPS.map((s, k) => (
        <g key={k} fill={s.bar}>
          {bars.map((x, i) => {
            const y = Math.round(at(s.pts, x));
            return <rect key={i} x={Math.round(x) - 2} y={y} width="4" height={Math.max(0, 912 - y)} />;
          })}
        </g>
      ))}
      {CHIPS.map((s, k) => (
        <path
          key={k}
          d={'M' + bars.map((x) => `${Math.round(x)} ${Math.round(at(s.pts, x)) + 0.5}`).join('L')}
          fill="none"
          stroke={s.line}
          strokeWidth="1.2"
        />
      ))}
    </Drawing>
  );
};

const priceTop = (y: number) => (y - 29) / 664;
const chipTop = (y: number) => (y - 695) / 220;

const PairTable = ({ rows }: { rows: Pair[] }) => (
  <QuoteTable>
    <colgroup>
      <col style={{ width: 54 }} />
      <col style={{ width: 72 }} />
      <col style={{ width: 73 }} />
      <col />
    </colgroup>
    <tbody>
      {rows.map(([a, av, ac, b, bv, bc]) => (
        <tr key={a}>
          <Label scope="row">{a}</Label>
          <Value $color={ac}>{av}</Value>
          <PairLabel scope="row">{b}</PairLabel>
          <Value $color={bc} $inset={bv === '--' ? 16 : 0}>
            {bv}
          </Value>
        </tr>
      ))}
    </tbody>
  </QuoteTable>
);

const BookTable = ({ rows }: { rows: Level[] }) => (
  <QuoteTable>
    <colgroup>
      <col style={{ width: 54 }} />
      <col style={{ width: 72 }} />
      <col />
    </colgroup>
    <tbody>
      {rows.map(([name, price, volume, color]) => (
        <tr key={name}>
          <Label scope="row">{name}</Label>
          <Value $color={color}>{price}</Value>
          <Value $color={YELLOW}>{volume}</Value>
        </tr>
      ))}
    </tbody>
  </QuoteTable>
);

const SpeedArrow = ({ up }: { up?: boolean }) => (
  <svg width="7" height="10" viewBox="0 0 7 10" aria-hidden="true">
    <path
      d={up ? 'M3.5 0L7 4.5H4.5V10H2.5V4.5H0z' : 'M3.5 10L7 5.5H4.5V0H2.5V5.5H0z'}
      fill={up ? '#18a8ff' : '#00c46a'}
    />
  </svg>
);

const SystemMonitor = () => (
  <Monitor>
    <svg width="22" height="24" viewBox="0 0 22 24" aria-hidden="true">
      <path
        d="M11 1c3 2 6 3 9.5 3v8c0 5-4 9-9.5 11C5.5 21 1.5 17 1.5 12V4C5 4 8 3 11 1z"
        fill="#00be64"
        stroke="#2a7be0"
        strokeWidth="1.5"
      />
      <path d="M6.5 12l3.5 3.5 6-6.5" fill="none" stroke="#fff" strokeWidth="2.5" />
    </svg>
    <MonitorBody>
      <Gauge>
        <svg width="53" height="53" viewBox="0 0 53 53" fill="none" aria-hidden="true">
          <defs>
            <linearGradient id="load" x1="0" x2="0" y1="0" y2="1">
              <stop offset="0" stopColor="#c8c83c" />
              <stop offset="0.4" stopColor="#8cc864" />
              <stop offset="1" stopColor="#28bec8" />
            </linearGradient>
          </defs>
          <circle cx="26.5" cy="26.5" r="25" fill="#23252f" fillOpacity="0.8" stroke="#3a3c49" strokeWidth="2.5" />
          <path d="M2 27a24.5 24.5 0 0 0 49 0" stroke="url(#load)" strokeWidth="2" />
        </svg>
        <span>
          49<small>%</small>
        </span>
      </Gauge>
      <Speed>
        <SpeedArrow up />
        <span>
          1.2<small>K/s</small>
        </span>
      </Speed>
      <Speed>
        <SpeedArrow />
        <span>
          2.1<small>K/s</small>
        </span>
      </Speed>
      <MonitorRule />
      <CpuTag>CPU</CpuTag>
      <CpuLoad>
        1<small>%</small>
      </CpuLoad>
    </MonitorBody>
  </Monitor>
);

export default function App() {
  return (
    <>
      <Global />
      <Page>
        <Workspace>
          <Toolbar>
            <ToolIcon aria-label="侧栏">
              <PanelIcon />
            </ToolIcon>
            {PERIODS.map(([name, w]) => (
              <PeriodButton key={name} $w={w} $active={name === '日线'}>
                {name}
              </PeriodButton>
            ))}
            <Actions>
              {ACTIONS.map((a) => (
                <ActionButton key={a}>{a}</ActionButton>
              ))}
            </Actions>
          </Toolbar>

          <MainPane>
            <Plot>
              <CandleDrawing />
              <Legend>
                <MainName>
                  华控赛格(日线)
                  <IconButton aria-label="指标">
                    <ChevronIcon />
                  </IconButton>
                  MOS看盘系统
                </MainName>
                {SHORT_LABELS.map((t) => (
                  <LegendItem key={t} $color="#ee00ee">
                    {t}
                  </LegendItem>
                ))}
                {LONG_LABELS.map((t) => (
                  <LegendItem key={t} $color="#e60000">
                    {t}
                  </LegendItem>
                ))}
                <LegendTools>
                  <IconButton aria-label="标注">
                    <DiamondIcon />
                  </IconButton>
                  <IconButton aria-label="面板">
                    <PanelIcon />
                  </IconButton>
                </LegendTools>
              </Legend>
              <Mark $x={851} $y={priceTop(83)} $color="#e8e8e8">
                6.49
              </Mark>
              <Mark $x={1479} $y={priceTop(661)} $color="#e8e8e8">
                2.71
              </Mark>
              {LOWS.map(([x, y]) => (
                <Mark key={x} $x={x + 8} $y={priceTop(y)} $color="#d20000">
                  低点
                </Mark>
              ))}
              <Mark $x={1521} $y={priceTop(641)} $color="#d200d2">
                底部结构
              </Mark>
              {EVENTS.map(([t, x, bg]) => (
                <EventBadge key={t} $x={x} $bg={bg}>
                  {t}
                </EventBadge>
              ))}
            </Plot>
            <PriceAxis>
              {PRICES.map((p, i) =>
                p ? (
                  <AxisRow key={i} $major={i % 2 === 0}>
                    {p}
                  </AxisRow>
                ) : (
                  <CursorRow key={i}>
                    <CursorPrice>5.93</CursorPrice>
                  </CursorRow>
                ),
              )}
            </PriceAxis>
          </MainPane>

          <LowerPane>
            <LowerPlot>
              <ChipDrawing />
              <ChipLegend>
                <LegendName>
                  <IconButton aria-label="指标">
                    <ChevronIcon />
                  </IconButton>
                  筹码初探
                </LegendName>
                {CHIP_LABELS.map(([t, c]) => (
                  <LegendItem key={t} $color={c}>
                    {t}
                  </LegendItem>
                ))}
              </ChipLegend>
              <Mark $x={764} $y={chipTop(884)} $color="#f0c800">
                买
              </Mark>
            </LowerPlot>
            <LowerAxis>
              <AxisRow $major>1.00</AxisRow>
              <AxisRow $major={false} />
              <AxisRow $major>0.50</AxisRow>
            </LowerAxis>
          </LowerPane>

          <TimeAxis>
            <Months>
              <Drawing viewBox="0 0 1561 21" preserveAspectRatio="none" aria-hidden="true">
                {WEEKS.map((x) => (
                  <path key={x} d={`M${x + 0.5} 0V4`} stroke={LINE} />
                ))}
              </Drawing>
              {MONTHS.map(([m]) => (
                <Month key={m}>{m}</Month>
              ))}
              <CursorDate>2023/11/22/三</CursorDate>
            </Months>
            <PeriodName>日线</PeriodName>
          </TimeAxis>
        </Workspace>

        <Sidebar>
          <Title>000068 华控赛格</Title>
          <Block>
            <PairTable rows={[['委比', '12.07%', RED, '委差', '1707', RED]]} />
          </Block>
          <Block>
            <BookTable rows={SELLS} />
          </Block>
          <Block>
            <BookTable rows={BUYS} />
          </Block>
          <Block>
            <PairTable rows={QUOTE} />
          </Block>
          <Block $heavy>
            <PairTable rows={BASICS} />
          </Block>
          <Status>交易状态: 闭市阶段 15:00:00</Status>
          <NetBlock>
            <NetRow $color="#00d200">
              <NetLabel>
                主力净额
                <NoteIcon />
              </NetLabel>
              <NetAmount>
                <NetBar style={{ width: 5 }} />
                -125.9万
              </NetAmount>
              <span>-5%</span>
            </NetRow>
            <NetRow $color={RED}>
              <NetLabel>5日主力净额</NetLabel>
              <NetAmount>
                <NetBar style={{ width: 28 }} />
                603.2万
              </NetAmount>
              <span>6%</span>
            </NetRow>
          </NetBlock>
          <Trades>
            <TradeTable>
              <colgroup>
                <col style={{ width: 55 }} />
                <col style={{ width: 74 }} />
                <col style={{ width: 76 }} />
                <col style={{ width: 26 }} />
                <col />
              </colgroup>
              <tbody>
                {TRADES.map(([time, price, volume, side, count], i) => (
                  <tr key={i}>
                    <td>{time}</td>
                    <Value $color={GREEN}>{price}</Value>
                    <Value $color={YELLOW}>{volume}</Value>
                    <Value $color={side === 'B' ? RED : GREEN}>{side}</Value>
                    <Value $color="#787878">{count}</Value>
                  </tr>
                ))}
              </tbody>
            </TradeTable>
          </Trades>
          <SystemMonitor />
        </Sidebar>
      </Page>
    </>
  );
}
